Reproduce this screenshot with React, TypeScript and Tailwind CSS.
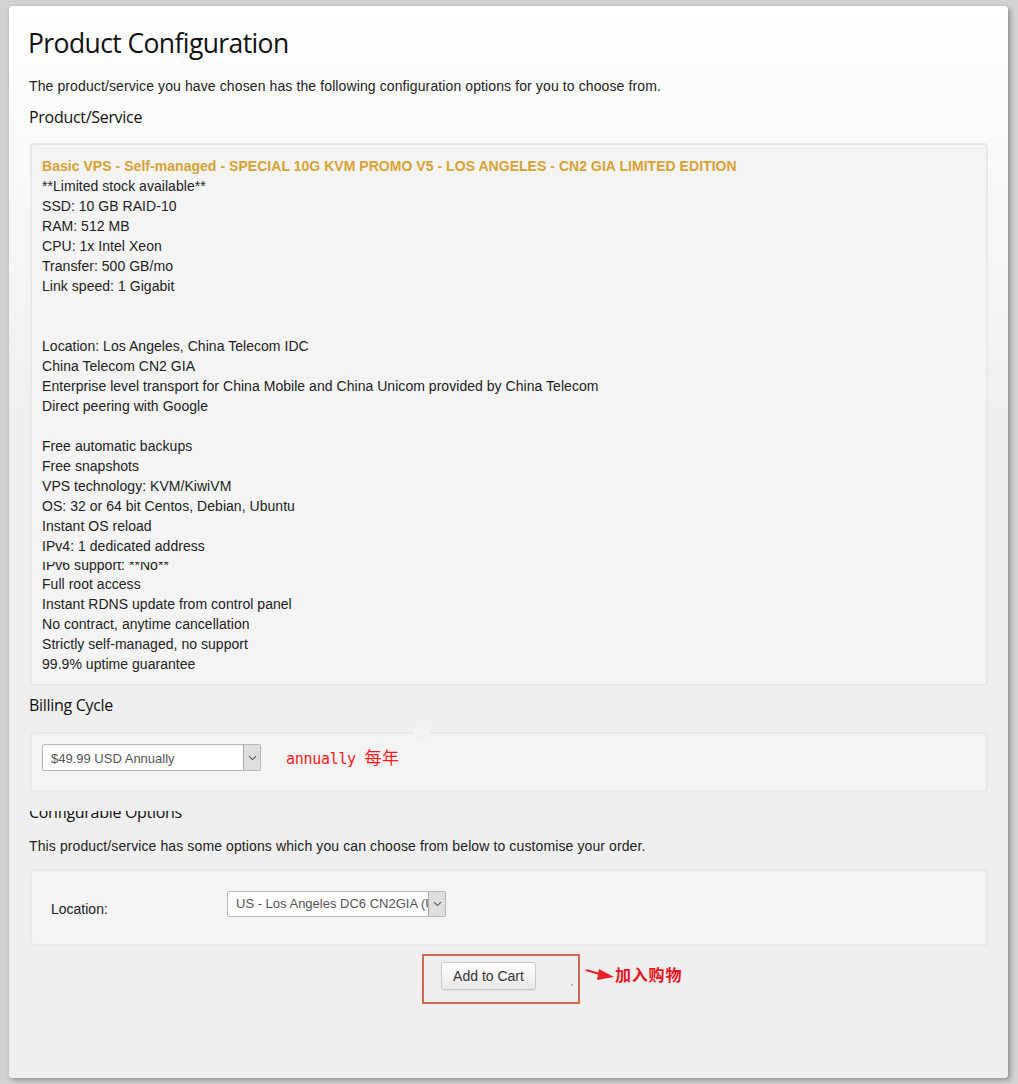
import React from "react";

const lines: (string | null)[] = [
  "**Limited stock available**",
  "SSD: 10 GB RAID-10",
  "RAM: 512 MB",
  "CPU: 1x Intel Xeon",
  "Transfer: 500 GB/mo",
  "Link speed: 1 Gigabit",
  null,
  null,
  "Location: Los Angeles, China Telecom IDC",
  "China Telecom CN2 GIA",
  "Enterprise level transport for China Mobile and China Unicom provided by China Telecom",
  "Direct peering with Google",
  null,
  "Free automatic backups",
  "Free snapshots",
  "VPS technology: KVM/KiwiVM",
  "OS: 32 or 64 bit Centos, Debian, Ubuntu",
  "Instant OS reload",
  "IPv4: 1 dedicated address",
];

const lines2 = [
  "Full root access",
  "Instant RDNS update from control panel",
  "No contract, anytime cancellation",
  "Strictly self-managed, no support",
  "99.9% uptime guarantee",
];

function Chevron() {
  return (
    <svg width="9" height="6" viewBox="0 0 9 6" fill="none">
      <path d="M1 1.2 L4.5 4.6 L8 1.2" stroke="#555" strokeWidth="1.1" />
    </svg>
  );
}

export default function App() {
  const heading = "text-[16px] leading-[22px] text-[#111] font-['Open_Sans',sans-serif] tracking-[-0.3px]";
  return (
    <div className="min-h-[1084px] bg-[#d2d2d2] pt-[6px] pl-[9px] font-['Liberation_Sans',Arial,sans-serif]">
      <div className="w-[999px] h-[1072px] rounded-[4px] bg-[linear-gradient(to_bottom,#ffffff_0px,#efefef_420px,#efefef_100%)] shadow-[2px_2px_5px_rgba(0,0,0,0.35)] pt-[19px] pl-[20px] pr-[20px]">
        <h1 className="-ml-[1px] text-[26.5px] leading-[36px] text-[#111] font-['Open_Sans',sans-serif] tracking-[-0.6px]">
          Product Configuration
        </h1>
        <p className="mt-[15px] text-[14px] leading-[20px] text-[#222] tracking-[0.11px]">
          The product/service you have chosen has the following configuration options for you to choose from.
        </p>
        <div className={`mt-[10px] ${heading}`}>Product/Service</div>

        <div className="mt-[15px] ml-[1px] w-[958px] rounded-[4px] border-2 border-[#e8e8e8] bg-[#f4f4f4] pt-[11px] pb-[10px] pl-[10px] text-[14px] leading-[20px] text-[#222] tracking-[0.04px]">
          <div className="font-bold text-[#d9a232]">
            Basic VPS - Self-managed - SPECIAL 10G KVM PROMO V5 - LOS ANGELES - CN2 GIA LIMITED EDITION
          </div>
          {lines.map((l, i) => (
            <div key={i} className="h-[20px]">
              {l ?? ""}
            </div>
          ))}
          <div className="h-[18px] pt-[6px]">
            <div className="h-[12px] overflow-hidden">
              <div className="-mt-[7px]">IPv6 support: **No**</div>
            </div>
          </div>
          {lines2.map((l, i) => (
            <div key={i} className="h-[20px]">
              {l}
            </div>
          ))}
        </div>

        <div className={`mt-[8px] ${heading}`}>Billing Cycle</div>

        <div className="relative mt-[16px] ml-[1px] w-[958px] h-[60px] rounded-[4px] border-2 border-[#e8e8e8] bg-[#f4f4f4] pt-[10px] pl-[10px] flex items-start">
          <div className="absolute -top-[8px] left-[382px] w-[16px] h-[16px] rounded-full bg-[#f2f2f2]" />
          <div className="flex h-[27px] w-[219px] rounded-[2px] border border-[#b8b8b8] bg-white shadow-[inset_0_1px_1px_rgba(0,0,0,0.05)]">
            <div className="flex-1 pl-[8px] pt-[1px] text-[13px] leading-[26px] text-[#555]">$49.99 USD Annually</div>
            <div className="w-[17px] flex items-center justify-center bg-[#dedede] border-l border-[#a8a8a8]">
              <Chevron />
            </div>
          </div>
          <div className="ml-[25px] mt-[2px] text-[15px] leading-[22px] text-[#ff1a1a] font-['DejaVu_Sans_Mono','Noto_Sans_CJK_SC',monospace] tracking-[-0.3px]">
            annually <span className="text-[17px] font-['Noto_Sans_CJK_SC',sans-serif] tracking-[0.5px]">每年</span>
          </div>
        </div>

        <div className="mt-[19px] h-[12px] overflow-hidden">
          <div className={`-mt-[10px] ${heading}`}>Configurable Options</div>
        </div>
        <p className="mt-[13px] text-[14px] leading-[20px] text-[#222] tracking-[0.11px]">
          This product/service has some options which you can choose from below to customise your order.
        </p>

        <div className="mt-[13px] ml-[1px] w-[958px] h-[77px] rounded-[4px] border-2 border-[#e8e8e8] bg-[#f4f4f4] pt-[20px] pl-[19px] flex items-start">
          <div className="w-[176px] mt-[8px] text-[14px] leading-[20px] text-[#222]">Location:</div>
          <div className="flex h-[26px] w-[219px] rounded-[2px] border border-[#b8b8b8] bg-white">
            <div className="flex-1 overflow-hidden whitespace-nowrap pl-[8px] text-[13px] leading-[24px] text-[#555]">
              US - Los Angeles DC6 CN2GIA (US)
            </div>
            <div className="w-[17px] flex items-center justify-center bg-[#dedede] border-l border-[#a8a8a8]">
              <Chevron />
            </div>
          </div>
        </div>

        <div className="mt-[8px] flex items-start">
          <div className="relative ml-[393px] w-[158px] h-[50px] border-2 border-[#cf6a4f] pt-[6px] pl-[17px]">
            <button className="h-[28px] w-[95px] rounded-[3px] border border-[#c8c8c8] bg-[linear-gradient(to_bottom,#ffffff,#e8e8e8)] text-[14px] text-[#333] shadow-[0_1px_1px_rgba(0,0,0,0.08)]">
              Add to Cart
            </button>
            <div className="absolute left-[147px] top-[28px] w-[2px] h-[2px] bg-[#bbb]" />
          </div>
          <div className="ml-[5px] mt-[10px] flex items-center">
            <svg width="30" height="14" viewBox="0 0 30 14">
              <line x1="1" y1="3" x2="18" y2="8" stroke="#e8222a" strokeWidth="2" />
              <polygon points="14,2 29,10 12,13" fill="#e8222a" />
            </svg>
            <span className="text-[16px] leading-[20px] font-bold text-[#e8141c] font-['Noto_Sans_CJK_SC',sans-serif] tracking-[0.8px]">
              加入购物
            </span>
          </div>
        </div>
      </div>
    </div>
  );
}
